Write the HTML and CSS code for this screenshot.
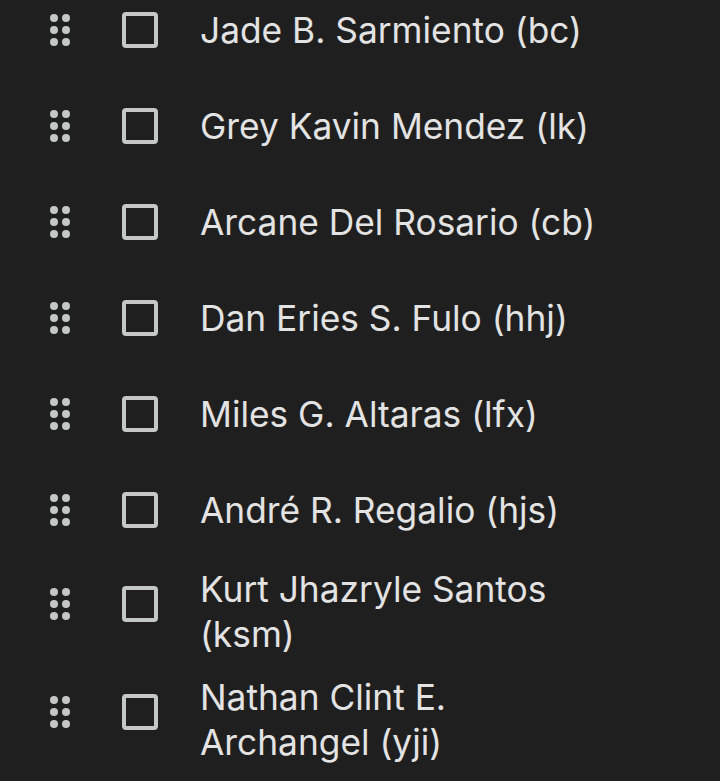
FILE: index.html
```html
<!DOCTYPE html>
<html lang="en">
<head>
    <meta charset="UTF-8">
    <meta name="viewport" content="width=device-width, initial-scale=1.0">
    <title>Ranking</title>
    <link rel="stylesheet" href="styles.css">
</head>
<body>
    <ul class="rank-list">
        <li class="row">
            <span class="handle"><svg viewBox="0 0 20 32"><circle cx="4" cy="4" r="4"/><circle cx="16" cy="4" r="4"/><circle cx="4" cy="16" r="4"/><circle cx="16" cy="16" r="4"/><circle cx="4" cy="28" r="4"/><circle cx="16" cy="28" r="4"/></svg></span>
            <span class="box"></span>
            <span class="name">Jade B. Sarmiento (bc)</span>
        </li>
        <li class="row">
            <span class="handle"><svg viewBox="0 0 20 32"><circle cx="4" cy="4" r="4"/><circle cx="16" cy="4" r="4"/><circle cx="4" cy="16" r="4"/><circle cx="16" cy="16" r="4"/><circle cx="4" cy="28" r="4"/><circle cx="16" cy="28" r="4"/></svg></span>
            <span class="box"></span>
            <span class="name">Grey Kavin Mendez (lk)</span>
        </li>
        <li class="row">
            <span class="handle"><svg viewBox="0 0 20 32"><circle cx="4" cy="4" r="4"/><circle cx="16" cy="4" r="4"/><circle cx="4" cy="16" r="4"/><circle cx="16" cy="16" r="4"/><circle cx="4" cy="28" r="4"/><circle cx="16" cy="28" r="4"/></svg></span>
            <span class="box"></span>
            <span class="name">Arcane Del Rosario (cb)</span>
        </li>
        <li class="row">
            <span class="handle"><svg viewBox="0 0 20 32"><circle cx="4" cy="4" r="4"/><circle cx="16" cy="4" r="4"/><circle cx="4" cy="16" r="4"/><circle cx="16" cy="16" r="4"/><circle cx="4" cy="28" r="4"/><circle cx="16" cy="28" r="4"/></svg></span>
            <span class="box"></span>
            <span class="name">Dan Eries S. Fulo (hhj)</span>
        </li>
        <li class="row">
            <span class="handle"><svg viewBox="0 0 20 32"><circle cx="4" cy="4" r="4"/><circle cx="16" cy="4" r="4"/><circle cx="4" cy="16" r="4"/><circle cx="16" cy="16" r="4"/><circle cx="4" cy="28" r="4"/><circle cx="16" cy="28" r="4"/></svg></span>
            <span class="box"></span>
            <span class="name">Miles G. Altaras (lfx)</span>
        </li>
        <li class="row">
            <span class="handle"><svg viewBox="0 0 20 32"><circle cx="4" cy="4" r="4"/><circle cx="16" cy="4" r="4"/><circle cx="4" cy="16" r="4"/><circle cx="16" cy="16" r="4"/><circle cx="4" cy="28" r="4"/><circle cx="16" cy="28" r="4"/></svg></span>
            <span class="box"></span>
            <span class="name">André R. Regalio (hjs)</span>
        </li>
        <li class="row two-line">
            <span class="handle"><svg viewBox="0 0 20 32"><circle cx="4" cy="4" r="4"/><circle cx="16" cy="4" r="4"/><circle cx="4" cy="16" r="4"/><circle cx="16" cy="16" r="4"/><circle cx="4" cy="28" r="4"/><circle cx="16" cy="28" r="4"/></svg></span>
            <span class="box"></span>
            <span class="name">Kurt Jhazryle Santos (ksm)</span>
        </li>
        <li class="row two-line">
            <span class="handle"><svg viewBox="0 0 20 32"><circle cx="4" cy="4" r="4"/><circle cx="16" cy="4" r="4"/><circle cx="4" cy="16" r="4"/><circle cx="16" cy="16" r="4"/><circle cx="4" cy="28" r="4"/><circle cx="16" cy="28" r="4"/></svg></span>
            <span class="box"></span>
            <span class="name">Nathan Clint E. Archangel (yji)</span>
        </li>
    </ul>
</body>
</html>
```

FILE: styles.css
```css
html, body {
    background-color: #1f1f1f;
}
body {
    margin: 0;
    font-family: Inter, Roboto, "Liberation Sans", sans-serif;
    color: #e3e3e3;
    overflow: hidden;
}
.rank-list {
    list-style: none;
    margin: -18px 0 0 0;
    padding: 0;
}
.row {
    display: flex;
    align-items: center;
    box-sizing: border-box;
    min-height: 96px;
    padding: 9px 0 9px 50px;
}
.handle {
    width: 20px;
    height: 32px;
    flex: none;
}
.handle svg {
    display: block;
    width: 20px;
    height: 32px;
    fill: #c4c7c5;
}
.box {
    flex: none;
    box-sizing: border-box;
    width: 36px;
    height: 36px;
    margin-left: 52px;
    border: 4px solid #c4c7c5;
    border-radius: 4px;
}
.two-line .handle,
.two-line .box {
    margin-bottom: 16px;
}
.name {
    margin-left: 42px;
    max-width: 405px;
    font-size: 35.3px;
    line-height: 45px;
}
```
